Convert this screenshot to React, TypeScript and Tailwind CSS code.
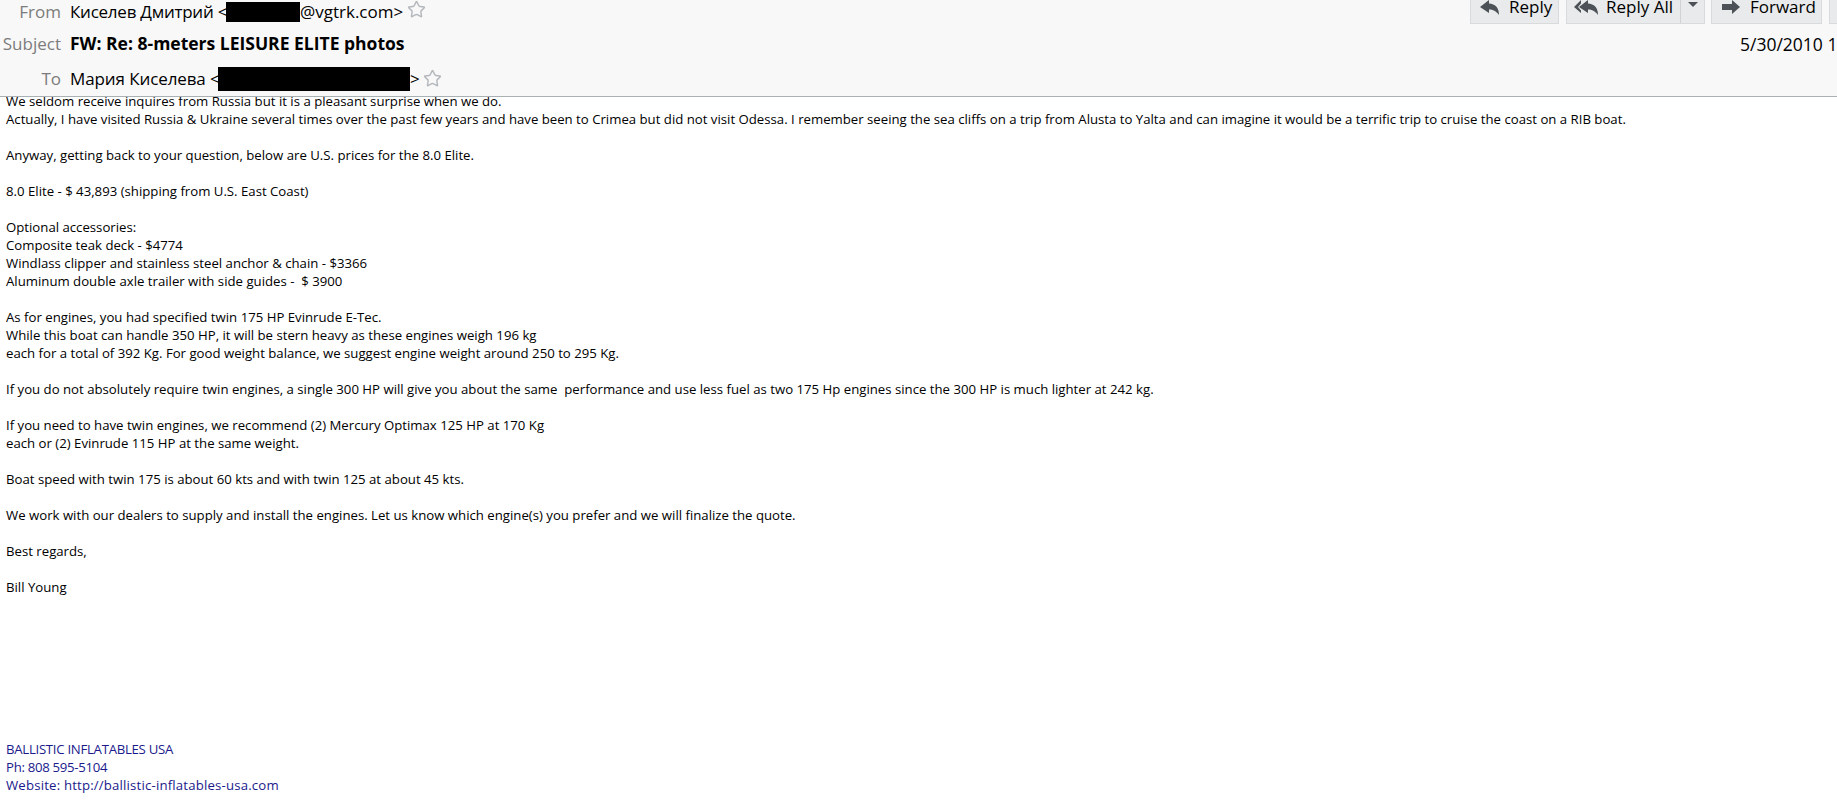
import React from "react";
import { Star } from "lucide-react";

const bodyLines = [
  "We seldom receive inquires from Russia but it is a pleasant surprise when we do.",
  "Actually, I have visited Russia & Ukraine several times over the past few years and have been to Crimea but did not visit Odessa. I remember seeing the sea cliffs on a trip from Alusta to Yalta and can imagine it would be a terrific trip to cruise the coast on a RIB boat.",
  "",
  "Anyway, getting back to your question, below are U.S. prices for the 8.0 Elite.",
  "",
  "8.0 Elite - $ 43,893 (shipping from U.S. East Coast)",
  "",
  "Optional accessories:",
  "Composite teak deck - $4774",
  "Windlass clipper and stainless steel anchor & chain - $3366",
  "Aluminum double axle trailer with side guides -  $ 3900",
  "",
  "As for engines, you had specified twin 175 HP Evinrude E-Tec.",
  "While this boat can handle 350 HP, it will be stern heavy as these engines weigh 196 kg",
  "each for a total of 392 Kg. For good weight balance, we suggest engine weight around 250 to 295 Kg.",
  "",
  "If you do not absolutely require twin engines, a single 300 HP will give you about the same  performance and use less fuel as two 175 Hp engines since the 300 HP is much lighter at 242 kg.",
  "",
  "If you need to have twin engines, we recommend (2) Mercury Optimax 125 HP at 170 Kg",
  "each or (2) Evinrude 115 HP at the same weight.",
  "",
  "Boat speed with twin 175 is about 60 kts and with twin 125 at about 45 kts.",
  "",
  "We work with our dealers to supply and install the engines. Let us know which engine(s) you prefer and we will finalize the quote.",
  "",
  "Best regards,",
  "",
  "Bill Young",
];

const ReplyIcon = ({ className }: { className?: string }) => (
  <svg viewBox="0 0 19 15" className={className} fill="#4b5157">
    <path d="M9 0 0 7l9 6V9.500c4 0 7 1.500 10 5.500 0-8-4-11-10-11.500z" />
  </svg>
);

const ReplyAllIcon = ({ className }: { className?: string }) => (
  <svg viewBox="0 0 24 15" className={className} fill="#4b5157">
    <path d="M7 0 0 7l7 6v-2.500L4 7l3-3.500z" />
    <path d="M14 0 5 7l9 6V9.500c4 0 7 1.500 10 5.500 0-8-4-11-10-11.500z" />
  </svg>
);

const ForwardIcon = ({ className }: { className?: string }) => (
  <svg viewBox="0 0 18 14" className={className} fill="#4b5157">
    <path d="M10 0l8 7-8 7V10H0V4h10z" />
  </svg>
);

const ActionButton = ({ icon, label, className }: { icon: React.ReactNode; label: string; className: string }) => (
  <div className={`flex h-[25px] items-center gap-[10px] border border-[#d8dadb] bg-[#e9eaeb] pb-[9px] ${className}`}>
    {icon}
    <span>{label}</span>
  </div>
);

export default function App() {
  return (
    <div className="h-[801px] w-[1837px] overflow-hidden bg-white font-['Open_Sans','Noto_Sans',sans-serif] text-black">
      <header className="relative z-10 flex h-[97px] overflow-hidden border-b border-[#a9b0b3] bg-[#f8f8f8] text-[17px]">
        <div className="w-[61px] shrink-0 text-right text-[#7c7c7c]">
          <div className="h-[23px] leading-[23px]">From</div>
          <div className="mt-[9px] h-[23px] leading-[23px]">Subject</div>
          <div className="mt-[12px] h-[23px] leading-[23px]">To</div>
        </div>
        <div className="ml-[9px] flex-1">
          <div className="flex h-[23px] items-center leading-[23px]">
            <span className="w-[156px] whitespace-nowrap tracking-[-0.25px]">Киселев Дмитрий &lt;</span>
            <span className="h-[20px] w-[74px] bg-black" />
            <span>@vgtrk.com&gt;</span>
            <Star className="ml-[4px] -mt-[5px] h-[19px] w-[19px] text-[#b4b8bc]" strokeWidth={1.8} />
          </div>
          <div className="mt-[9px] h-[23px] text-[17.5px] font-bold leading-[23px]">FW: Re: 8-meters LEISURE ELITE photos</div>
          <div className="mt-[12px] flex h-[23px] items-center leading-[23px]">
            <span className="w-[148px] whitespace-nowrap tracking-[-0.1px]">Мария Киселева &lt;</span>
            <span className="h-[24px] w-[192px] bg-black" />
            <span>&gt;</span>
            <Star className="ml-[3px] -mt-[1px] h-[19px] w-[19px] text-[#b4b8bc]" strokeWidth={1.8} />
          </div>
        </div>
        <div className="flex shrink-0 flex-col items-end">
          <div className="-mt-[1px] flex">
            <ActionButton className="mr-[7px] w-[89px] pl-[9px]" label="Reply" icon={<ReplyIcon className="h-[15px] w-[19px]" />} />
            <div className="mr-[6px] flex h-[25px] w-[139px] items-center border border-[#d8dadb] bg-[#e9eaeb]">
              <div className="flex flex-1 items-center gap-[8px] pb-[9px] pl-[7px]">
                <ReplyAllIcon className="h-[15px] w-[24px]" />
                <span>Reply All</span>
              </div>
              <div className="flex h-full w-[24px] items-start justify-center border-l border-[#cfd1d2] pt-[2px]">
                <span className="h-0 w-0 border-x-[5px] border-t-[5px] border-x-transparent border-t-[#4b5157]" />
              </div>
            </div>
            <ActionButton className="mr-[7px] w-[111px] pl-[10px]" label="Forward" icon={<ForwardIcon className="h-[14px] w-[18px]" />} />
            <div className="h-[25px] w-[8px] border border-r-0 border-[#d8dadb] bg-[#e9eaeb]" />
          </div>
          <div className="mt-[7px] w-[97px] overflow-hidden whitespace-nowrap text-[17.5px]">5/30/2010 1:54 PM</div>
        </div>
      </header>
      <main className="-mt-[5px] px-[6px] text-[13.2px] leading-[18px]">
        {bodyLines.map((line, i) => (
          <div key={i} className="h-[18px] whitespace-pre">{line}</div>
        ))}
        <div className="mt-[144px] text-[#1a1a8c]">
          <div className="tracking-[-0.28px]">BALLISTIC INFLATABLES USA</div>
          <div className="tracking-[-0.3px]">Ph: 808 595-5104</div>
          <div className="tracking-[0.18px]">Website: http://ballistic-inflatables-usa.com</div>
        </div>
      </main>
    </div>
  );
}
